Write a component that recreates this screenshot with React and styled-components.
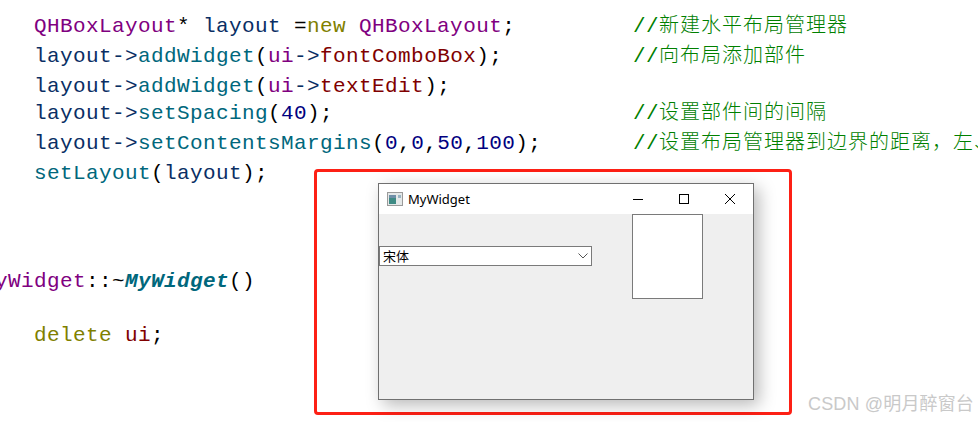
import React from 'react'
import styled, { createGlobalStyle } from 'styled-components'

const GlobalStyle = createGlobalStyle`
  html, body {
    margin: 0;
    padding: 0;
    background: #fff;
  }
`

const Page = styled.div`
  position: relative;
  width: 978px;
  height: 422px;
  overflow: hidden;
  background: #fff;
`

const Code = styled.div`
  display: flex;
  flex-direction: column;
  padding: 12px 0 0 34px;
  font-family: "Liberation Mono", "DejaVu Sans Mono", monospace;
  font-size: 21px;
  letter-spacing: 0.4px;
  color: #000;
`

const Row = styled.div`
  display: grid;
  grid-template-columns: 599px 345px;
  height: 30px;
  line-height: 30px;
  white-space: nowrap;
  margin-top: ${p => p.$top || 0}px;
  margin-left: ${p => p.$left || 0}px;
`

const Comment = styled.span`
  color: #008000;
  overflow: hidden;
  height: 30px;
`

const Cjk = styled.span`
  font-family: "Noto Sans CJK SC", sans-serif;
  font-size: 20px;
  font-weight: 300;
  line-height: 1;
  letter-spacing: 1px;
`

const Type = styled.span`color: #800080;`
const Ident = styled.span`color: #092e64;`
const Key = styled.span`color: #808000;`
const Func = styled.span`color: #00677c;`
const Member = styled.span`color: #800000;`
const Num = styled.span`color: #000080;`
const Ital = styled.span`
  color: #00677c;
  font-weight: bold;
  font-style: italic;
`

const Shot = styled.div`
  position: absolute;
  left: 314px;
  top: 169px;
  width: 478px;
  height: 246px;
  box-sizing: border-box;
  padding: 11px 0 0 61px;
  background: #fff;
  border: 3px solid #fd2015;
  border-radius: 4px;
`

const Win = styled.div`
  display: flex;
  flex-direction: column;
  width: 376px;
  height: 217px;
  box-sizing: border-box;
  border: 1px solid #707070;
  background: #efefef;
  box-shadow: 5px 5px 16px rgba(0, 0, 0, 0.28);
`

const TitleBar = styled.div`
  display: flex;
  align-items: center;
  height: 30px;
  flex: none;
  padding-left: 8px;
  background: #fff;
  font-family: "Noto Sans", sans-serif;
  font-size: 13px;
  color: #000;
`

const Title = styled.span`
  margin-left: 5px;
  margin-top: -1px;
  flex: 1;
`

const WinButton = styled.span`
  display: flex;
  align-items: center;
  justify-content: center;
  width: 46px;
  height: 30px;
`

const WinBody = styled.div`
  display: flex;
  align-items: flex-start;
  flex: 1;
`

const Combo = styled.div`
  display: flex;
  align-items: center;
  justify-content: space-between;
  width: 213px;
  height: 20px;
  box-sizing: border-box;
  margin-top: 32px;
  padding: 0 3px 1px;
  background: #fff;
  border: 1px solid #7a7a7a;
  font-family: "Noto Sans CJK SC", sans-serif;
  font-size: 13px;
  color: #000;
`

const TextEdit = styled.div`
  width: 71px;
  height: 85px;
  box-sizing: border-box;
  margin-left: 40px;
  background: #fff;
  border: 1px solid #7a7a7a;
`

const Watermark = styled.div`
  position: absolute;
  right: 4px;
  top: 392px;
  font-family: "Liberation Sans", "Noto Sans CJK SC", sans-serif;
  font-size: 18px;
  line-height: 24px;
  letter-spacing: 0.15px;
  color: #c9c9c9;
`

const WindowIcon = () => (
  <svg width="16" height="14" viewBox="0 0 16 14">
    <rect x="0.5" y="0.5" width="15" height="13" fill="#e4e8e8" stroke="#9a9a9a" />
    <rect x="2" y="3" width="7" height="9" fill="#3e8a84" />
    <rect x="2" y="3" width="7" height="3" fill="#6f8fa8" />
    <rect x="11" y="3" width="3" height="3" fill="#9ab4c2" />
  </svg>
)

const MinIcon = () => (
  <svg width="10" height="10" viewBox="0 0 10 10">
    <path d="M0 5.5h10" stroke="#000" />
  </svg>
)

const MaxIcon = () => (
  <svg width="10" height="10" viewBox="0 0 10 10">
    <rect x="0.5" y="0.5" width="9" height="9" fill="none" stroke="#000" />
  </svg>
)

const CloseIcon = () => (
  <svg width="10" height="10" viewBox="0 0 10 10">
    <path d="M0 0l10 10M10 0L0 10" stroke="#000" strokeWidth="1" />
  </svg>
)

const ChevronIcon = () => (
  <svg width="10" height="6" viewBox="0 0 10 6">
    <path d="M0.5 0.5L5 5L9.5 0.5" fill="none" stroke="#555" />
  </svg>
)

const App = () => {
  return (
    <Page>
      <GlobalStyle />
      <Code>
        <Row>
          <span><Type>QHBoxLayout</Type>* <Ident>layout</Ident> =<Key>new</Key> <Type>QHBoxLayout</Type>;</span>
          <Comment>//<Cjk>新建水平布局管理器</Cjk></Comment>
        </Row>
        <Row>
          <span><Ident>layout-&gt;</Ident><Func>addWidget</Func>(<Type>ui</Type><Ident>-&gt;</Ident><Member>fontComboBox</Member>);</span>
          <Comment>//<Cjk>向布局添加部件</Cjk></Comment>
        </Row>
        <Row>
          <span><Ident>layout-&gt;</Ident><Func>addWidget</Func>(<Type>ui</Type><Ident>-&gt;</Ident><Member>textEdit</Member>);</span>
        </Row>
        <Row $top={-3}>
          <span><Ident>layout-&gt;</Ident><Func>setSpacing</Func>(<Num>40</Num>);</span>
          <Comment>//<Cjk>设置部件间的间隔</Cjk></Comment>
        </Row>
        <Row>
          <span><Ident>layout-&gt;</Ident><Func>setContentsMargins</Func>(<Num>0</Num>,<Num>0</Num>,<Num>50</Num>,<Num>100</Num>);</span>
          <Comment>//<Cjk>设置布局管理器到边界的距离，左、</Cjk></Comment>
        </Row>
        <Row>
          <span><Func>setLayout</Func>(<Ident>layout</Ident>);</span>
        </Row>
        <Row $top={78} $left={-52}>
          <span><Type>MyWidget</Type>::~<Ital>MyWidget</Ital>()</span>
        </Row>
        <Row $top={24}>
          <span><Key>delete</Key> <Member>ui</Member>;</span>
        </Row>
      </Code>

      <Shot>
        <Win>
          <TitleBar>
            <WindowIcon />
            <Title>MyWidget</Title>
            <WinButton><MinIcon /></WinButton>
            <WinButton><MaxIcon /></WinButton>
            <WinButton><CloseIcon /></WinButton>
          </TitleBar>
          <WinBody>
            <Combo>
              宋体
              <ChevronIcon />
            </Combo>
            <TextEdit />
          </WinBody>
        </Win>
      </Shot>

      <Watermark>CSDN @明月醉窗台</Watermark>
    </Page>
  )
}

export default App
